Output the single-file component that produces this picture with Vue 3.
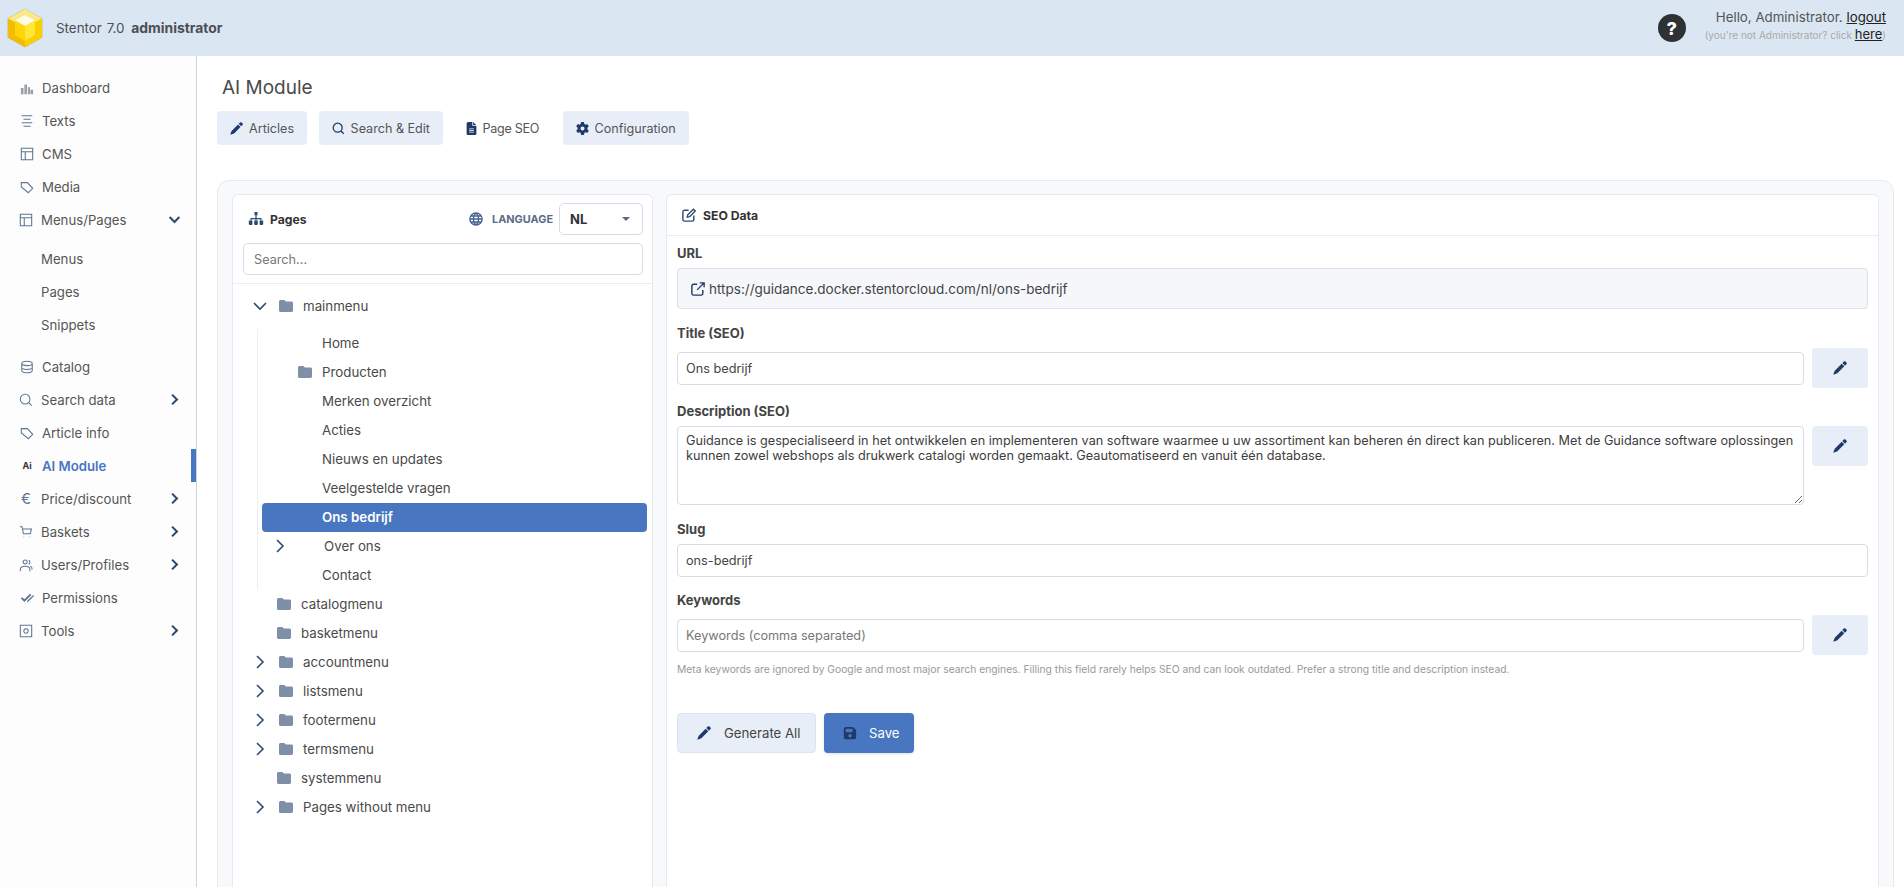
<template>
  <div class="app">
    <header class="topbar">
      <div class="brand">
        <svg class="logo" viewBox="0 0 36 40" width="36" height="40">
          <polygon points="18,1 35,10.5 35,29.5 18,39 1,29.5 1,10.5" fill="#f5c400" stroke="#c9bd8e" stroke-width="1" />
          <polygon points="18,1 35,10.5 18,20 1,10.5" fill="#fbe88a" />
          <polygon points="1,10.5 18,20 18,39 1,29.5" fill="#f2bd00" />
          <polygon points="35,10.5 18,20 18,39 35,29.5" fill="#f8d000" />
          <polygon points="18,7 28,12.5 18,18 8,12.5" fill="#fffbe6" />
          <polygon points="8,12.5 18,18 18,33 8,27" fill="#ffd60a" />
          <polygon points="28,12.5 18,18 18,33 28,27" fill="#ffe733" />
        </svg>
        <span class="brand-name">Stentor 7.0 <b>administrator</b></span>
      </div>
      <div class="user-area">
        <span class="help">?</span>
        <div class="user-text">
          <div class="hello">Hello, Administrator. <a>logout</a></div>
          <div class="not-you">(you're not Administrator? click <a>here</a>)</div>
        </div>
      </div>
    </header>

    <div class="body">
      <nav class="sidebar">
        <template v-for="item in nav" :key="item.label">
          <div :class="['nav-row', { active: item.active, 'has-chev': item.chev }]">
            <span v-if="item.glyph" :class="['nav-glyph', item.glyphClass]">{{ item.glyph }}</span>
            <Ico v-else class="nav-icon" :name="item.icon" :size="14" />
            <span class="nav-label">{{ item.label }}</span>
            <Ico v-if="item.chev" class="nav-chev" :name="item.chev" :size="13" />
          </div>
          <div v-if="item.children" class="nav-sub">
            <div v-for="c in item.children" :key="c" class="nav-sub-row">{{ c }}</div>
          </div>
        </template>
      </nav>

      <main class="main">
        <h1 class="page-title">AI Module</h1>
        <div class="tabs">
          <div v-for="t in tabs" :key="t.label" :class="['tab', { current: t.current }]">
            <Ico class="tab-icon" :name="t.icon" :size="13" />
            <span>{{ t.label }}</span>
          </div>
        </div>

        <section class="card">
          <div class="panel pages">
            <div class="pages-head">
              <div class="head-row">
                <Ico class="head-icon" name="sitemap" :size="16" />
                <span class="head-title">Pages</span>
                <Ico class="globe" name="globe" :size="14" />
                <span class="lang-label">LANGUAGE</span>
                <div class="lang-select"><select><option>NL</option></select></div>
              </div>
              <input class="field search" placeholder="Search..." />
            </div>
            <div class="tree">
              <div class="row root">
                <span class="chev"><Ico name="chevDown" :size="16" /></span>
                <Ico class="folder" name="folder" :size="14" />
                <span>mainmenu</span>
              </div>
              <div class="children">
                <div v-for="c in mainChildren" :key="c.label" :class="['row', 'child', c.kind, { selected: c.selected }]">
                  <span v-if="c.kind === 'closed'" class="chev"><Ico name="chevRight" :size="16" /></span>
                  <Ico v-if="c.kind === 'dir'" class="folder" name="folder" :size="14" />
                  <span>{{ c.label }}</span>
                </div>
              </div>
              <div v-for="r in rootRows" :key="r.label" :class="['row', 'root', { leaf: !r.closed }]">
                <span v-if="r.closed" class="chev"><Ico name="chevRight" :size="16" /></span>
                <Ico class="folder" name="folder" :size="14" />
                <span>{{ r.label }}</span>
              </div>
            </div>
          </div>

          <div class="panel seo">
            <div class="seo-head">
              <Ico class="head-icon" name="edit" :size="14" />
              <span class="head-title">SEO Data</span>
            </div>
            <div class="seo-body">
              <div class="group">
                <label>URL</label>
                <div class="url-box">
                  <Ico class="url-icon" name="external" :size="14" />
                  <span>https://guidance.docker.stentorcloud.com/nl/ons-bedrijf</span>
                </div>
              </div>
              <div class="group tight">
                <label>Title (SEO)</label>
                <div class="with-btn mid">
                  <input class="field" value="Ons bedrijf" />
                  <button class="gen-btn"><Ico name="pen" :size="14" /></button>
                </div>
              </div>
              <div class="group">
                <label>Description (SEO)</label>
                <div class="with-btn">
                  <textarea class="field area" :value="description"></textarea>
                  <button class="gen-btn"><Ico name="pen" :size="14" /></button>
                </div>
              </div>
              <div class="group tight">
                <label>Slug</label>
                <input class="field" value="ons-bedrijf" />
              </div>
              <div class="group">
                <label>Keywords</label>
                <div class="with-btn mid">
                  <input class="field" placeholder="Keywords (comma separated)" />
                  <button class="gen-btn"><Ico name="pen" :size="14" /></button>
                </div>
                <p class="hint">Meta keywords are ignored by Google and most major search engines. Filling this field rarely helps SEO and can look outdated. Prefer a strong title and description instead.</p>
              </div>
              <div class="actions">
                <button class="btn generate"><Ico name="pen" :size="14" />Generate All</button>
                <button class="btn save"><Ico name="save" :size="14" />Save</button>
              </div>
            </div>
          </div>
        </section>
      </main>
    </div>
  </div>
</template>

<script setup>
import { h } from 'vue'

// fill = solid shape, line = outlined shape
const icons = {
  bars: { vb: '0 0 16 16', fill: 'M1 8h3v7H1zM5 4h3v11H5zM9 7h2.500v8H9zM12 10h3v5h-3z' },
  lines: { vb: '0 0 16 16', line: 'M2 2h12M4 6h8M2 10h12M4 14h8' },
  layout: { vb: '0 0 16 16', line: 'M1.500 1.500h13v13h-13zM1.500 5.500h13M6 5.500v9' },
  tag: { vb: '0 0 16 16', line: 'M1.500 3h7l6 6.500-5 5-8-6.500z' },
  database: { vb: '0 0 16 16', line: 'M2 4c0-3.500 12-3.500 12 0v8c0 3.500-12 3.500-12 0zM2 4c0 3.200 12 3.200 12 0M2 8.500c0 3 12 3 12 0' },
  search: { vb: '0 0 16 16', line: 'M7 1.500a5.500 5.500 0 1 0 0 11 5.500 5.500 0 0 0 0-11zM11 11l3.500 3.500' },
  tabSearch: { vb: '0 0 16 16', line: 'M7 1.500a5.500 5.500 0 1 0 0 11 5.500 5.500 0 0 0 0-11zM11 11l3.500 3.500', thick: true },
  cart: { vb: '0 0 16 16', line: 'M1 2h2.500l1.500 8h8l1.200-5.500H4M5.500 13.500v.5M12.500 13.500v.5' },
  users: { vb: '0 0 16 16', line: 'M7 2.200a2.300 2.300 0 1 0 0 4.600 2.300 2.300 0 0 0 0-4.600zM1.500 15v-2c0-2 2-3.500 5.500-3.500s5.500 1.500 5.500 3.500v2M11 2.500c2 .5 2 4 0 4.500M13 9.500c1.500.5 2 1.800 2 3.500' },
  check: { vb: '0 0 16 16', fill: 'M1 8.500l1.500-1.500 2.500 2.500L11.500 3 13 4.500 5 12.500zM8 11.500l7-7 1 1.200-7.500 7.300z' },
  tools: { vb: '0 0 16 16', line: 'M1.500 1.500h13v13h-13zM8 5.500a2.500 2.500 0 1 0 0 5 2.500 2.500 0 0 0 0-5z' },
  chevDown: { vb: '0 0 16 16', line: 'M2 5l6 6 6-6', thick: true },
  chevRight: { vb: '0 0 16 16', line: 'M5 2l6 6-6 6', thick: true },
  navRight: { vb: '0 0 16 16', line: 'M5 2l6 6-6 6', heavy: true },
  navDown: { vb: '0 0 16 16', line: 'M2 5l6 6 6-6', heavy: true },
  pen: { vb: '0 0 16 16', fill: 'M12.300.700a1.500 1.500 0 0 1 2.100 0l.9.9a1.500 1.500 0 0 1 0 2.100l-1.600 1.600-3-3zM9.900 3.100l3 3L5 14l-3.800 1.500a.5.5 0 0 1-.7-.7L2 11z' },
  file: { vb: '0 0 384 512', fill: 'M64 0C28.700 0 0 28.700 0 64V448c0 35.300 28.700 64 64 64H320c35.300 0 64-28.700 64-64V160H256c-17.700 0-32-14.300-32-32V0H64zM256 0V128H384L256 0zM112 256H272c8.800 0 16 7.200 16 16s-7.200 16-16 16H112c-8.800 0-16-7.200-16-16s7.200-16 16-16zm0 64H272c8.800 0 16 7.200 16 16s-7.200 16-16 16H112c-8.800 0-16-7.200-16-16s7.200-16 16-16zm0 64H272c8.800 0 16 7.200 16 16s-7.200 16-16 16H112c-8.800 0-16-7.200-16-16s7.200-16 16-16z' },
  gear: { vb: '0 0 512 512', fill: 'M495.900 166.600c3.200 8.700 .5 18.400-6.400 24.600l-43.300 39.400c1.100 8.300 1.700 16.800 1.700 25.400s-.6 17.100-1.700 25.400l43.300 39.400c6.900 6.200 9.600 15.900 6.400 24.600c-4.400 11.900-9.700 23.300-15.800 34.300l-4.700 8.100c-6.600 11-14 21.400-22.100 31.200c-5.900 7.200-15.700 9.600-24.500 6.800l-55.700-17.700c-13.400 10.300-28.200 18.900-44 25.400l-12.500 57.100c-2 9.100-9 16.300-18.200 17.800c-13.800 2.300-28 3.500-42.500 3.500s-28.700-1.200-42.500-3.500c-9.200-1.500-16.200-8.700-18.200-17.800l-12.500-57.100c-15.800-6.500-30.600-15.100-44-25.400L83.100 425.900c-8.800 2.800-18.600 .3-24.500-6.800c-8.100-9.800-15.500-20.200-22.100-31.200l-4.700-8.100c-6.100-11-11.400-22.400-15.800-34.300c-3.200-8.700-.5-18.400 6.400-24.600l43.300-39.400C64.600 273.100 64 264.600 64 256s.6-17.100 1.700-25.400L22.400 191.200c-6.900-6.200-9.600-15.900-6.400-24.600c4.400-11.900 9.700-23.300 15.800-34.300l4.700-8.100c6.600-11 14-21.400 22.100-31.200c5.900-7.200 15.700-9.600 24.500-6.800l55.700 17.700c13.400-10.300 28.200-18.900 44-25.400l12.500-57.100c2-9.100 9-16.300 18.200-17.800C227.300 1.200 241.500 0 256 0s28.700 1.200 42.500 3.500c9.200 1.500 16.200 8.700 18.200 17.800l12.500 57.100c15.800 6.500 30.600 15.100 44 25.400l55.700-17.700c8.800-2.800 18.600-.3 24.500 6.800c8.100 9.800 15.500 20.200 22.100 31.200l4.700 8.100c6.100 11 11.400 22.400 15.800 34.300zM256 336a80 80 0 1 0 0-160 80 80 0 1 0 0 160z' },
  sitemap: { vb: '0 0 16 16', fill: 'M6.500 1h3v3.200h-3zM7.400 4.200h1.200V7h4.900v2.200h-1.200V8.200H8.600v1H7.400v-1H3.700v1H2.500V7h4.900zM.8 9.500h3.600V13a1 1 0 0 1-1 1H1.800a1 1 0 0 1-1-1zM6.200 9.500h3.600V13a1 1 0 0 1-1 1H7.200a1 1 0 0 1-1-1zM11.600 9.500h3.600V13a1 1 0 0 1-1 1h-1.600a1 1 0 0 1-1-1z' },
  globe: { vb: '0 0 16 16', line: 'M8 1a7 7 0 1 0 0 14A7 7 0 0 0 8 1zM1 8h14M2 4.500h12M2 11.500h12M8 1c-4 4-4 10 0 14M8 1c4 4 4 10 0 14', thick: true },
  folder: { vb: '0 0 14 14', fill: 'M1.500 1h3.300c.4 0 .7.1 1 .4L7 2.600h5.500c.8 0 1.500.7 1.500 1.500v7.400c0 .8-.7 1.500-1.500 1.500h-11C.7 13 0 12.300 0 11.500v-9C0 1.700.7 1 1.500 1z' },
  edit: { vb: '0 0 16 16', line: 'M7.500 2.500H3a2 2 0 0 0-2 2V13a2 2 0 0 0 2 2h8.500a2 2 0 0 0 2-2V8.500M6 10.500l.6-2.800L13 1.300l2.200 2.200-6.400 6.400z', thick: true },
  external: { vb: '0 0 16 16', line: 'M7 2.500H3a2 2 0 0 0-2 2V13a2 2 0 0 0 2 2h8.500a2 2 0 0 0 2-2V9M10 1h5v5M15 1L7 9', thick: true },
  save: { vb: '0 0 448 512', fill: 'M64 32C28.700 32 0 60.700 0 96V416c0 35.300 28.700 64 64 64H384c35.300 0 64-28.700 64-64V173.300c0-17-6.700-33.300-18.700-45.300L352 50.700C340 38.700 323.700 32 306.700 32H64zm0 96c0-17.700 14.300-32 32-32H288c17.700 0 32 14.300 32 32v64c0 17.700-14.300 32-32 32H96c-17.700 0-32-14.300-32-32V128zM224 288a64 64 0 1 1 0 128 64 64 0 1 1 0-128z' },
}

const Ico = (props) => {
  const i = icons[props.name]
  const d = i.fill || i.line
  const attrs = i.fill
    ? { d, fill: 'currentColor' }
    : { d, fill: 'none', stroke: 'currentColor', 'stroke-width': i.heavy ? 2.6 : i.thick ? 1.6 : 1.2 }
  return h('svg', { viewBox: i.vb, width: props.size, height: props.size, style: 'flex:none;display:block' }, [h('path', attrs)])
}
Ico.props = ['name', 'size']

const nav = [
  { label: 'Dashboard', icon: 'bars' },
  { label: 'Texts', icon: 'lines' },
  { label: 'CMS', icon: 'layout' },
  { label: 'Media', icon: 'tag' },
  { label: 'Menus/Pages', icon: 'layout', chev: 'navDown', children: ['Menus', 'Pages', 'Snippets'] },
  { label: 'Catalog', icon: 'database' },
  { label: 'Search data', icon: 'search', chev: 'navRight' },
  { label: 'Article info', icon: 'tag' },
  { label: 'AI Module', glyph: 'Ai', glyphClass: 'ai', active: true },
  { label: 'Price/discount', glyph: '€', glyphClass: 'euro', chev: 'navRight' },
  { label: 'Baskets', icon: 'cart', chev: 'navRight' },
  { label: 'Users/Profiles', icon: 'users', chev: 'navRight' },
  { label: 'Permissions', icon: 'check' },
  { label: 'Tools', icon: 'tools', chev: 'navRight' },
]

const tabs = [
  { label: 'Articles', icon: 'pen' },
  { label: 'Search & Edit', icon: 'tabSearch' },
  { label: 'Page SEO', icon: 'file', current: true },
  { label: 'Configuration', icon: 'gear' },
]

const mainChildren = [
  { label: 'Home', kind: 'plain' },
  { label: 'Producten', kind: 'dir' },
  { label: 'Merken overzicht', kind: 'plain' },
  { label: 'Acties', kind: 'plain' },
  { label: 'Nieuws en updates', kind: 'plain' },
  { label: 'Veelgestelde vragen', kind: 'plain' },
  { label: 'Ons bedrijf', kind: 'plain', selected: true },
  { label: 'Over ons', kind: 'closed' },
  { label: 'Contact', kind: 'plain' },
]

const rootRows = [
  { label: 'catalogmenu' },
  { label: 'basketmenu' },
  { label: 'accountmenu', closed: true },
  { label: 'listsmenu', closed: true },
  { label: 'footermenu', closed: true },
  { label: 'termsmenu', closed: true },
  { label: 'systemmenu' },
  { label: 'Pages without menu', closed: true },
]

const description = 'Guidance is gespecialiseerd in het ontwikkelen en implementeren van software waarmee u uw assortiment kan beheren én direct kan publiceren. Met de Guidance software oplossingen kunnen zowel webshops als drukwerk catalogi worden gemaakt. Geautomatiseerd en vanuit één database.'
</script>

<style>
html, body { margin: 0; background: #fff; }
</style>

<style scoped>
.app { height: 887px; overflow: hidden; display: flex; flex-direction: column; font-family: Inter, "Liberation Sans", sans-serif; font-size: 13.2px; color: #4a4a4a; }
.topbar { height: 56px; flex: none; background: #dae6f2; display: flex; align-items: center; justify-content: space-between; padding: 0 18px 0 7px; }
.brand { display: flex; align-items: center; gap: 13px; }
.logo { display: block; }
.brand-name { font-size: 13.4px; color: #4b4f55; word-spacing: 1px; }
.brand-name b { font-weight: 700; font-size: 13.9px; margin-left: 2px; }
.user-area { display: flex; align-items: center; gap: 19px; }
.help { width: 28px; height: 28px; border-radius: 50%; background: #2f3133; color: #fff; font-weight: 800; font-size: 18px; display: flex; align-items: center; justify-content: center; }
.user-text { text-align: right; margin-bottom: 6px; }
.hello { font-size: 13.3px; color: #555; line-height: 18px; }
.hello a, .not-you a { color: #222; text-decoration: underline; }
.not-you { font-size: 10px; color: #aaa; line-height: 16px; }
.not-you a { font-size: 13px; }

.body { flex: 1; min-height: 0; display: flex; }
.sidebar { width: 196px; flex: none; box-sizing: content-box; border-right: 1px solid #c5d9df; background: #fdfdfd; padding-top: 15px; }
.nav-row { height: 33px; display: flex; align-items: center; padding: 0 12px 0 20px; position: relative; color: #555; }
.nav-icon { color: #5f7592; }
.nav-row:first-child .nav-icon { color: #9aa0a8; }
.nav-label { margin-left: 8px; }
.nav-row.has-chev { padding-left: 19px; }
.nav-chev { color: #2e4a72; margin-left: auto; margin-right: 3px; }
.nav-glyph { width: 14px; text-align: center; flex: none; }
.nav-glyph.ai { font-size: 9px; font-weight: 700; color: #333; }
.nav-glyph.euro { font-size: 15px; color: #5f7592; }
.nav-row.active { color: #4876c0; font-weight: 600; }
.nav-row.active::after { content: ""; position: absolute; right: 0; top: 0; bottom: 0; width: 5px; background: #4876c0; }
.nav-sub { padding: 7px 0 8px 41px; }
.nav-sub-row { height: 33px; line-height: 33px; color: #555; }

.main { flex: 1; min-width: 0; padding: 0 10px 0 20px; }
.page-title { margin: 0; padding-left: 5px; height: 55px; line-height: 64px; font-size: 19px; font-weight: 400; color: #4a4a4a; }
.tabs { display: flex; gap: 11.5px; height: 34px; }
.tab { display: flex; align-items: center; gap: 6px; padding: 0 13px; border-radius: 4px; background: #e8eef7; color: #555; font-size: 12.6px; }
.tab-icon { color: #1f3a68; }
.tab.current { background: transparent; padding: 0 12px; letter-spacing: -0.3px; }
.tab.current .tab-icon { margin: 0 -1.5px; }
.card { margin-top: 35px; height: 800px; box-sizing: border-box; padding: 13px 14px; display: flex; gap: 13px; background: #f8f9fb; border: 1px solid #e6eaf0; border-radius: 12px; }
.panel { background: #fff; border: 1px solid #e6eaf0; border-radius: 6px; }
.pages { width: 421px; flex: none; box-sizing: border-box; }
.seo { flex: 1; min-width: 0; }
.pages-head { padding: 8px 9px 8px 10px; border-bottom: 1px solid #e9ecf1; }
.head-row { height: 32px; display: flex; align-items: center; margin-bottom: 8px; padding-left: 5px; }
.head-icon { color: #2e4a72; }
.head-title { font-weight: 700; font-size: 12.2px; color: #333; margin-left: 6px; }
.globe { margin-left: auto; color: #4a6690; }
.lang-label { font-size: 10.9px; font-weight: 700; color: #5a6b85; margin-left: 9px; }
.lang-select { width: 84px; height: 32px; margin-left: 6px; position: relative; }
.lang-select select { width: 100%; height: 100%; appearance: none; border: 1px solid #d6dbe6; border-radius: 5px; background: #fff; padding: 0 10px; font: 700 13px Inter, sans-serif; color: #333; }
.lang-select::after { content: ""; position: absolute; right: 13px; top: 14px; border: 4px solid transparent; border-top-color: #5a6b85; border-bottom: 0; }
.field { display: block; width: 100%; box-sizing: border-box; height: 33px; border: 1px solid #d8dce6; border-radius: 4px; background: #fff; padding: 0 8px; font: 400 12.7px Inter, sans-serif; color: #444; outline: none; }
.field::placeholder { color: #777; opacity: 1; }
.search { height: 32px; border-radius: 5px; padding: 0 10px; }
.tree { padding: 7.5px 5px 0 0; font-size: 13.3px; }
.row { height: 29px; display: flex; align-items: center; color: #4a4a4a; }
.row.root { padding-left: 19px; }
.row.root .chev { width: 16px; margin-right: 11px; }
.row.root .folder { margin-right: 10px; }
.row.root.leaf { padding-left: 44px; }
.chev { display: flex; justify-content: center; color: #2e4a72; flex: none; }
.folder { color: #7f8fa8; }
.children { margin: 8px 0 0 24px; border-left: 1px solid #eef0f4; }
.row.child { margin-left: 4px; border-radius: 4px; padding-left: 60px; }
.row.child.dir { padding-left: 36px; }
.row.child.dir .folder { margin-right: 10px; }
.row.child.closed { padding-left: 10px; }
.row.child.closed .chev { width: 16px; margin-right: 36px; }
.row.child.selected { background: #4876c0; color: #fff; font-weight: 600; }
.seo-head { height: 40px; display: flex; align-items: center; padding-left: 15px; border-bottom: 1px solid #e9ecf1; }
.seo-head .head-title { margin-left: 7px; }
.seo-body { padding: 7px 10px 0; }
.group { margin-bottom: 14px; }
.group.tight { margin-bottom: 13px; }
.group label { display: block; font-weight: 700; font-size: 13px; line-height: 20px; margin-bottom: 5px; color: #444; }
.url-box { height: 41px; box-sizing: border-box; display: flex; align-items: center; gap: 4px; padding-left: 13px; background: #f5f7fa; border: 1px solid #dde1e9; border-radius: 4px; color: #444; font-size: 13.5px; }
.url-icon { color: #1f3a68; }
.with-btn { display: flex; align-items: flex-start; gap: 8px; }
.with-btn.mid { align-items: center; }
.area { height: 79px; padding: 6px 4px 6px 8px; line-height: 15px; font-size: 12.7px; resize: both; color: #3d3d3d; }
.gen-btn { width: 56px; height: 40px; flex: none; border: 0; border-radius: 4px; background: #e8eef7; color: #1f3a68; display: flex; align-items: center; justify-content: center; padding: 0; }
.hint { margin: 7px 0 0; font-size: 10.3px; line-height: 14px; color: #999; }
.actions { display: flex; gap: 8px; margin-top: 37px; }
.btn { height: 40px; box-sizing: border-box; display: flex; align-items: center; border-radius: 4px; font: 400 13.2px Inter, sans-serif; }
.btn.generate { width: 139px; padding-left: 19px; gap: 13px; background: #e8eef7; border: 1px solid #dde4ef; color: #444; }
.btn.generate svg, .btn.save svg { color: #1f3a68; }
.btn.save { width: 90px; padding-left: 19px; gap: 12px; background: #4876c0; border: 0; color: #fff; box-shadow: 0 1px 3px rgba(0, 0, 0, 0.12); }
</style>
